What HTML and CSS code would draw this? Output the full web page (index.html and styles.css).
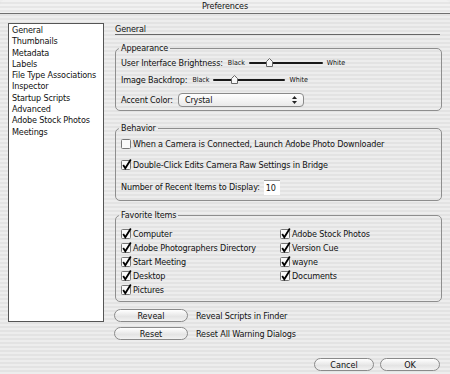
FILE: index.html
```html
<!DOCTYPE html>
<html lang="en">
<head>
  <meta charset="UTF-8" />
  <title>Preferences</title>
  <link rel="stylesheet" href="styles.css">
</head>
<body>
  <div class="titlebar">Preferences</div>

  <div class="main">
    <ul class="sidebar">
      <li>General</li>
      <li>Thumbnails</li>
      <li>Metadata</li>
      <li>Labels</li>
      <li>File Type Associations</li>
      <li>Inspector</li>
      <li>Startup Scripts</li>
      <li>Advanced</li>
      <li>Adobe Stock Photos</li>
      <li>Meetings</li>
    </ul>

    <div class="content">
      <div class="pane-title">General</div>

      <fieldset class="group appearance">
        <legend>Appearance</legend>
        <div class="row">
          <span>User Interface Brightness:</span>
          <span class="tiny first">Black</span>
          <span class="slider wide"><i class="thumb" style="left: 27%"></i></span>
          <span class="tiny">White</span>
        </div>
        <div class="row">
          <span>Image Backdrop:</span>
          <span class="tiny first">Black</span>
          <span class="slider"><i class="thumb" style="left: 29%"></i></span>
          <span class="tiny">White</span>
        </div>
        <div class="row select-row">
          <span>Accent Color:</span>
          <div class="select">
            <span>Crystal</span>
            <svg class="stepper" width="7" height="10" viewBox="0 0 7 10">
              <path d="M3.5 1 L6 4 L1 4 Z" fill="#222"/>
              <path d="M3.5 9 L6 6 L1 6 Z" fill="#222"/>
            </svg>
          </div>
        </div>
      </fieldset>

      <fieldset class="group behavior">
        <legend>Behavior</legend>
        <label class="check">
          <svg width="11" height="12" viewBox="0 0 11 12"><rect x="0.5" y="1.5" width="9" height="9" rx="1" fill="#fafafa" stroke="#777"/></svg>
          When a Camera is Connected, Launch Adobe Photo Downloader
        </label>
        <label class="check on">
          <svg width="11" height="12" viewBox="0 0 11 12"><rect x="0.5" y="1.5" width="9" height="9" rx="1" fill="#fafafa" stroke="#777"/><path d="M2.2 6 L4.3 9.3 L9.8 0.6" fill="none" stroke="#000" stroke-width="1.8"/></svg>
          Double-Click Edits Camera Raw Settings in Bridge
        </label>
        <div class="row recent">
          <span>Number of Recent Items to Display:</span>
          <span class="field">10</span>
        </div>
      </fieldset>

      <fieldset class="group favorites">
        <legend>Favorite Items</legend>
        <div class="fav-grid" id="favGrid"></div>
      </fieldset>

      <div class="action-row">
        <button class="pill">Reveal</button>
        <span>Reveal Scripts in Finder</span>
      </div>
      <div class="action-row">
        <button class="pill">Reset</button>
        <span>Reset All Warning Dialogs</span>
      </div>

      <div class="footer">
        <button class="pill small">Cancel</button>
        <button class="pill small">OK</button>
      </div>
    </div>
  </div>

  <script>
    // left column first, then right column
    const favorites = [
      "Computer", "Adobe Stock Photos",
      "Adobe Photographers Directory", "Version Cue",
      "Start Meeting", "wayne",
      "Desktop", "Documents",
      "Pictures"
    ];

    const tick = '<svg width="11" height="12" viewBox="0 0 11 12"><rect x="0.5" y="1.5" width="9" height="9" rx="1" fill="#fafafa" stroke="#777"/><path d="M2.2 6 L4.3 9.3 L9.8 0.6" fill="none" stroke="#000" stroke-width="1.8"/></svg>';

    const grid = document.getElementById("favGrid");
    favorites.forEach(name => {
      grid.innerHTML += `<label class="check on">${tick}${name}</label>`;
    });
  </script>
</body>
</html>
```

FILE: styles.css
```css
body {
  margin: 0;
  width: 450px;
  height: 374px;
  overflow: hidden;
  font-family: "DejaVu Sans Condensed", "DejaVu Sans", sans-serif;
  font-size: 9px;
  letter-spacing: -0.15px;
  color: #111;
  background: repeating-linear-gradient(#ededed 0 2px, #e3e3e3 2px 4px);
}

.titlebar {
  height: 13px;
  line-height: 13px;
  text-align: center;
  border-bottom: 1px solid #6e6e6e;
  border-radius: 5px 5px 0 0;
  background: repeating-linear-gradient(#f1f1f1 0 2px, #e6e6e6 2px 4px);
}

.main {
  display: flex;
  padding: 9px 8px 0 8px;
}

.sidebar {
  list-style: none;
  margin: 0;
  width: 96px;
  height: 299px;
  box-sizing: border-box;
  padding: 1px 3px;
  background: #fff;
  border: 1px solid #555;
}

.sidebar li {
  line-height: 11.3px;
  white-space: nowrap;
}

.content {
  flex: 1;
  margin-left: 11px;
  display: flex;
  flex-direction: column;
}

.pane-title {
  margin-top: 1px;
  line-height: 10px;
  border-bottom: 1px solid #666;
  margin-right: 2px;
}

.group {
  margin: 8px 0 0;
  padding: 3px 5px 2px;
  border: 1px solid #8e8e8e;
  border-radius: 5px;
  min-width: 0;
}

.group legend {
  padding: 0 2px;
  margin-left: -2px;
  line-height: 10px;
}

.row {
  display: flex;
  align-items: center;
  height: 14px;
  white-space: nowrap;
}

.appearance .row + .row {
  margin-top: 3px;
}

.appearance .select-row {
  height: 16px;
  margin-top: 5px !important;
}

.tiny {
  font-size: 7px;
  letter-spacing: 0;
  margin-left: 4px;
}

.tiny.first {
  margin-left: 5px;
  margin-right: 4px;
}

.slider {
  position: relative;
  width: 72px;
  height: 14px;
}

.slider.wide {
  width: 74px;
}

.slider::before {
  content: "";
  position: absolute;
  left: 0;
  right: 0;
  top: 6px;
  height: 2px;
  border-radius: 1px;
  background: #1a1a1a;
}

.thumb {
  position: absolute;
  top: 2px;
  width: 7px;
  height: 9px;
  margin-left: -3px;
  background: url("data:image/svg+xml,%3Csvg xmlns='http://www.w3.org/2000/svg' width='7' height='9'%3E%3Cpath d='M3.5 0.5 L6.5 3.5 L6.5 8.5 L0.5 8.5 L0.5 3.5 Z' fill='%23f6f6f6' stroke='%23666'/%3E%3C/svg%3E");
}

.select {
  display: flex;
  align-items: center;
  justify-content: space-between;
  margin-left: 5px;
  width: 126px;
  height: 14px;
  box-sizing: border-box;
  padding: 0 5px 0 6px;
  border: 1px solid #8a8a8a;
  border-radius: 4px;
  background: linear-gradient(#ffffff, #e9e9e9);
}

.check {
  display: flex;
  align-items: center;
  gap: 1px;
  height: 14px;
  white-space: nowrap;
}

.check svg {
  flex: none;
}

.behavior {
  margin-top: 12px;
  padding-top: 4px;
  padding-bottom: 5px;
}

.behavior .check + .check {
  margin-top: 7px;
}

.behavior .recent {
  height: 16px;
  margin-top: 7px;
}

.field {
  margin-left: 4px;
  width: 16px;
  height: 15px;
  line-height: 15px;
  box-sizing: border-box;
  padding-left: 2px;
  background: #fff;
  border-top: 1px solid #999;
}

.favorites {
  margin-top: 9px;
  padding-bottom: 4px;
}

.fav-grid {
  display: grid;
  grid-template-columns: 159px 1fr;
  grid-auto-rows: 14px;
  margin-top: 4px;
}

.action-row {
  display: flex;
  align-items: center;
  gap: 8px;
  margin-top: 7px;
  margin-left: -1px;
}

.action-row + .action-row {
  margin-top: 5px;
}

.pill {
  width: 74px;
  height: 13px;
  padding: 0;
  font: inherit;
  color: #111;
  border: 1px solid #8a8a8a;
  border-radius: 7px;
  background: linear-gradient(#ffffff, #e4e4e4 60%, #f2f2f2);
}

.footer {
  display: flex;
  justify-content: flex-end;
  gap: 6px;
  margin-top: 18px;
  margin-right: 2px;
}

.pill.small {
  width: 60px;
}
```
